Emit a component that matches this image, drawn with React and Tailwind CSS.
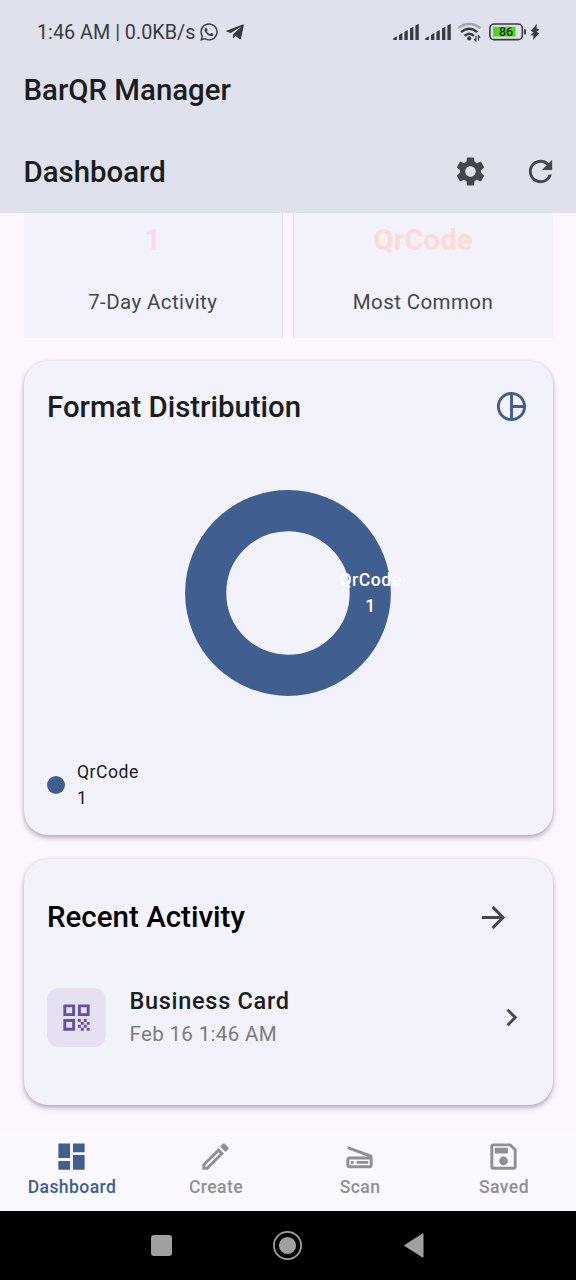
import React from "react";
import {
  MdSettings,
  MdRefresh,
  MdPieChartOutline,
  MdArrowForward,
  MdChevronRight,
  MdQrCode,
  MdDashboard,
  MdOutlineEdit,
  MdOutlineScanner,
  MdOutlineSave,
} from "react-icons/md";
import { FaWhatsapp, FaTelegramPlane } from "react-icons/fa";

function SignalBars() {
  return (
    <svg className="h-[18px] w-[26px]" viewBox="0 0 26 18" fill="#393b43">
      <path d="M0.3 17v-1.8l3.6-2V17Z" />
      <path d="M6 17v-5l3.4-1.9V17Z" />
      <path d="M11.4 17V8.9l3.4-1.9V17Z" />
      <path d="M17 17V5.6l3.4-1.9V17Z" />
      <path d="M22.4 17V2.6l3.4-1.9V17Z" />
    </svg>
  );
}

function Wifi() {
  return (
    <svg className="h-[20px] w-[25px]" viewBox="0 0 25 20" fill="none">
      <path d="M1.2 6.2Q12 -2.2 23.4 6.2" stroke="#a3a5ad" strokeWidth="2.3" />
      <path d="M4.1 10.2Q12.2 3.2 20.3 10.2" stroke="#393b43" strokeWidth="2.4" />
      <path d="M7.6 13.9Q12.2 9.6 16.9 13.9" stroke="#393b43" strokeWidth="2.3" />
      <circle cx="12.2" cy="16.4" r="2.1" fill="#393b43" />
      <path d="M18.8 13.8v5l-1.7-1.8M21.4 18.6v-4.8l1.8 1.8" stroke="#393b43" strokeWidth="1.2" />
    </svg>
  );
}

function Battery() {
  return (
    <div className="flex items-center">
      <svg className="h-[18px] w-[38px]" viewBox="0 0 38 18">
        <rect x="0.9" y="1" width="32.4" height="15.6" rx="4.2" fill="none" stroke="#393b43" strokeWidth="1.6" />
        <rect x="4" y="3.8" width="22.5" height="9.8" fill="#5bd021" />
        <path d="M35 6.2h1a1 1 0 0 1 1 1v3.2a1 1 0 0 1-1 1h-1Z" fill="#393b43" />
        <text x="17" y="13.2" textAnchor="middle" fontSize="12.5" fontWeight="500" fill="#173c10">
          86
        </text>
      </svg>
      <svg className="ml-[3px] h-[18px] w-[10px]" viewBox="0 0 10 18" fill="#393b43">
        <path d="M6.9 0.8L0.8 8.1 3.5 9.3 0.5 12.2 3.6 12.4 3.1 17 9.4 10 6.6 8.9 9.5 6 6.5 5.5Z" />
      </svg>
    </div>
  );
}

function StatusBar() {
  return (
    <div className="flex h-[64px] items-center justify-between pr-[36px] pl-[37px]">
      <div className="flex items-center text-[#393b43]">
        <span className="pt-px text-[19.8px] leading-6 whitespace-nowrap">1:46 AM | 0.0KB/s</span>
        <FaWhatsapp className="ml-[3.5px] size-[20px]" />
        <FaTelegramPlane className="ml-[6.5px] size-[20px]" />
      </div>
      <div className="flex items-center">
        <SignalBars />
        <div className="w-[6px]" />
        <SignalBars />
        <div className="w-[6px]" />
        <Wifi />
        <div className="w-[7px]" />
        <Battery />
      </div>
    </div>
  );
}

function NavItem({ icon: Icon, label, active }) {
  return (
    <div
      className={
        active
          ? "flex flex-1 flex-col items-center text-[#405f90]"
          : "flex flex-1 flex-col items-center text-[#8f8f95]"
      }
    >
      <Icon className="mt-[7.5px] mr-px size-[35px]" />
      <span className="mt-[3.5px] text-[17.6px] leading-5 font-medium tracking-[0.4px]">{label}</span>
    </div>
  );
}

export default function App() {
  return (
    <div className="flex h-[1280px] w-[576px] flex-col overflow-hidden bg-[#fdf6fe] font-[Roboto,sans-serif] text-[#191c20]">
      <header className="h-[213px] shrink-0 bg-[#dfe2ec]">
        <StatusBar />
        <h1 className="flex h-[54px] items-center pl-[23.5px] text-[29.4px] leading-none font-medium">BarQR Manager</h1>
        <div className="mt-[12px] flex h-[83px] items-center pr-[18px] pl-[23.5px]">
          <h2 className="flex-1 pt-[2px] text-[29.4px] leading-none font-medium">Dashboard</h2>
          <MdSettings className="size-[35px] text-[#44474e]" />
          <MdRefresh className="ml-[35px] size-[35px] text-[#44474e]" />
        </div>
      </header>

      <main className="flex h-[918px] shrink-0 flex-col px-[23.5px]">
        <section className="flex h-[125px] justify-between">
          <div className="flex w-[259.5px] flex-col items-center border-r border-[#e4dfea] bg-[#f2f3fa]">
            <p className="mt-[9px] text-[29.3px] leading-9 font-bold text-[#f6d9f8]">1</p>
            <p className="mt-[32px] text-[20.5px] leading-6 tracking-[0.4px] text-[#44474e]">7-Day Activity</p>
          </div>
          <div className="flex w-[260px] flex-col items-center border-l border-[#e4dfea] bg-[#f2f3fa]">
            <p className="mt-[9px] text-[29.3px] leading-9 font-bold text-[#ffdad6]">QrCode</p>
            <p className="mt-[32px] text-[20.5px] leading-6 tracking-[0.4px] text-[#44474e]">Most Common</p>
          </div>
        </section>

        <section className="mt-[23px] flex h-[474px] flex-col rounded-[24px] bg-[#f2f3fa] px-[23.5px] shadow-[0_3px_5px_rgba(60,50,70,0.34),0_0_3px_rgba(60,50,70,0.14)]">
          <div className="mt-[22.5px] flex h-[46px] items-center justify-between">
            <h3 className="pt-[2px] text-[29.4px] leading-none font-medium">Format Distribution</h3>
            <MdPieChartOutline className="size-[35px] text-[#405f90]" />
          </div>
          <div className="relative mx-auto mt-[60.5px] h-[206px] w-[206px]">
            <svg className="size-full" viewBox="0 0 206 206">
              <circle cx="103" cy="103" r="82.3" fill="none" stroke="#405f90" strokeWidth="41.2" />
            </svg>
            <div className="absolute top-[77px] left-[145.5px] w-[80px] text-center text-[17.6px] leading-[26.4px] font-medium tracking-[0.5px] text-white">
              QrCode
              <br />1
            </div>
          </div>
          <div className="mt-[63px] flex items-center gap-[12px]">
            <div className="size-[18px] rounded-full bg-[#405f90]" />
            <p className="text-[17.6px] leading-[26.4px] tracking-[0.5px]">
              QrCode
              <br />1
            </p>
          </div>
        </section>

        <section className="mt-[23.5px] flex h-[246.5px] flex-col rounded-[24px] bg-[#f2f3fa] px-[23.5px] shadow-[0_3px_5px_rgba(60,50,70,0.34),0_0_3px_rgba(60,50,70,0.14)]">
          <div className="mt-[35.5px] flex h-[46px] items-center justify-between pr-[18px]">
            <h3 className="pt-px text-[29.5px] leading-none font-medium text-black">Recent Activity</h3>
            <MdArrowForward className="size-[35px] text-[#44474e]" />
          </div>
          <div className="mt-[44px] flex items-center">
            <div className="flex size-[59px] items-center justify-center rounded-[12px] bg-[#e5e1f1]">
              <MdQrCode className="size-[35px] text-[#6750a4]" />
            </div>
            <div className="ml-[23.5px] flex-1">
              <p className="text-[23.5px] leading-[34px] font-medium tracking-[0.7px]">Business Card</p>
              <p className="text-[20.5px] leading-[33px] tracking-[0.35px] text-[#7b7b80]">Feb 16 1:46 AM</p>
            </div>
            <MdChevronRight className="size-[35px] text-[#44474e]" />
          </div>
        </section>
      </main>

      <nav className="flex h-[80px] shrink-0 bg-[#faf9ff]">
        <NavItem icon={MdDashboard} label="Dashboard" active />
        <NavItem icon={MdOutlineEdit} label="Create" />
        <NavItem icon={MdOutlineScanner} label="Scan" />
        <NavItem icon={MdOutlineSave} label="Saved" />
      </nav>

      <footer className="flex h-[69px] shrink-0 items-center justify-center bg-black">
        <svg className="h-[32px] w-[280px]" viewBox="0 0 280 32">
          <rect x="3" y="5" width="21" height="21" rx="3" fill="#a0a0a0" />
          <circle cx="139.5" cy="15.5" r="13.6" fill="none" stroke="#a0a0a0" strokeWidth="1.8" />
          <circle cx="139.5" cy="15.5" r="8.6" fill="#a0a0a0" />
          <path d="M256.5 15.5L275 3.7V27.3Z" fill="#a0a0a0" stroke="#a0a0a0" strokeWidth="1" strokeLinejoin="round" />
        </svg>
      </footer>
    </div>
  );
}
